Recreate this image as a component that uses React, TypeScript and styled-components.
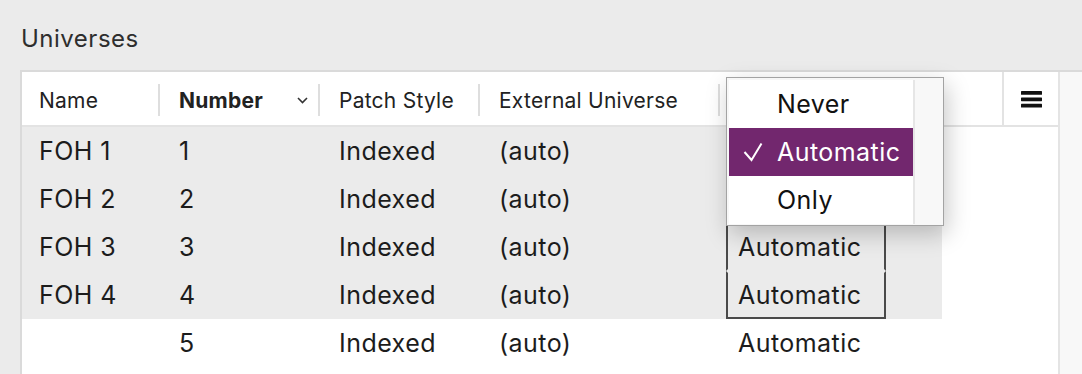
import React from "react";
import styled, { createGlobalStyle } from "styled-components";

const GlobalStyle = createGlobalStyle`
  html, body { margin: 0; padding: 0; background: #ebebeb; overflow: hidden; }
  body { font-family: Inter, "Open Sans", "Liberation Sans", sans-serif; color: #1c1c1c; }
`;

const Page = styled.div`
  width: 1082px;
  height: 374px;
  padding-left: 20px;
  box-sizing: border-box;
  overflow: hidden;
`;

const Title = styled.div`
  padding-top: 24px;
  margin-left: 1px;
  height: 46px;
  font-size: 24px;
  letter-spacing: 0.5px;
  line-height: 30px;
  color: #2e2e2e;
`;

const Panel = styled.div`
  position: relative;
  display: flex;
  height: 304px;
  border-top: 2px solid #dadada;
  border-left: 2px solid #dadada;
  background: #f8f8f8;
`;

const TableArea = styled.div`
  width: 1036px;
  flex: none;
  background: #ffffff;
  border-right: 2px solid #e4e4e4;
`;

const Track = styled.div`
  flex: 1;
  background: #f8f8f8;
`;

const HeaderRow = styled.div`
  display: flex;
  height: 53px;
  border-bottom: 2px solid #e3e3e3;
`;

const HeaderCell = styled.div<{ $w: number; $pad: number; $sep?: boolean; $bold?: boolean }>`
  position: relative;
  width: ${(p) => p.$w}px;
  flex: none;
  box-sizing: border-box;
  display: flex;
  align-items: center;
  justify-content: space-between;
  padding: 4px 12px 0 ${(p) => p.$pad}px;
  font-size: 21px;
  letter-spacing: 0.25px;
  font-weight: ${(p) => (p.$bold ? 700 : 400)};
  color: #222;
  white-space: nowrap;
  &::after {
    content: "";
    display: ${(p) => (p.$sep ? "block" : "none")};
    position: absolute;
    right: 0;
    top: 12px;
    bottom: 9px;
    width: 2px;
    background: #dedede;
  }
`;

const MenuCell = styled.div`
  flex: 1;
  display: flex;
  align-items: center;
  justify-content: center;
  border-left: 2px solid #e3e3e3;
  padding-top: 1px;
`;

const Row = styled.div<{ $selected: boolean }>`
  display: flex;
  width: 920px;
  height: 48px;
  background: ${(p) => (p.$selected ? "#ebebeb" : "transparent")};
`;

const Cell = styled.div<{ $w: number; $pad: number }>`
  width: ${(p) => p.$w}px;
  flex: none;
  box-sizing: border-box;
  display: flex;
  align-items: center;
  padding-left: ${(p) => p.$pad}px;
  font-size: 25px;
  letter-spacing: 0.45px;
  color: #1c1c1c;
  white-space: nowrap;
`;

const EditBox = styled.div<{ $on: boolean; $top: boolean; $bottom: boolean }>`
  width: 160px;
  height: 48px;
  box-sizing: border-box;
  display: flex;
  align-items: center;
  padding-left: 10px;
  border-left: 2px solid ${(p) => (p.$on ? "#4a4a4a" : "transparent")};
  border-right: 2px solid ${(p) => (p.$on ? "#4a4a4a" : "transparent")};
  border-top: 2px solid ${(p) => (p.$on && p.$top ? "#4a4a4a" : "transparent")};
  border-bottom: 2px solid ${(p) => (p.$on && p.$bottom ? "#4a4a4a" : "transparent")};
`;

const Dropdown = styled.div`
  position: absolute;
  left: 704px;
  top: 5px;
  width: 218px;
  height: 149px;
  box-sizing: border-box;
  display: flex;
  padding: 2px 0 1px 2px;
  background: #f7f7f7;
  border: 1px solid #a3a3a3;
  box-shadow: 3px 8px 22px rgba(0, 0, 0, 0.22);
`;

const List = styled.div`
  width: 184px;
  flex: none;
  background: #ffffff;
`;

const Strip = styled.div`
  flex: 1;
  border-left: 2px solid #e6e6e6;
  background: #f8f8f8;
`;

const Item = styled.div<{ $active: boolean }>`
  height: 48px;
  display: flex;
  align-items: center;
  padding-left: 14px;
  font-size: 25px;
  letter-spacing: 0.45px;
  color: ${(p) => (p.$active ? "#ffffff" : "#111111")};
  background: ${(p) => (p.$active ? "#72276e" : "transparent")};
`;

const CheckSlot = styled.div`
  width: 34px;
  flex: none;
  display: flex;
  align-items: center;
`;

const columns = [
  { label: "Name", w: 138, pad: 17 },
  { label: "Number", w: 160, pad: 19 },
  { label: "Patch Style", w: 160, pad: 19 },
  { label: "External Universe", w: 240, pad: 19 },
];

const rows = [
  { name: "FOH 1", num: "1", sel: true, hidden: true },
  { name: "FOH 2", num: "2", sel: true, hidden: true },
  { name: "FOH 3", num: "3", sel: true, hidden: false },
  { name: "FOH 4", num: "4", sel: true, hidden: false },
  { name: "", num: "5", sel: false, hidden: false },
];

const Chevron = () => (
  <svg width="11" height="7" viewBox="0 0 11 7">
    <polyline points="1,1 5.5,5.5 10,1" fill="none" stroke="#333" strokeWidth="1.6" />
  </svg>
);

const Hamburger = () => (
  <svg width="21" height="17" viewBox="0 0 21 17">
    <rect x="0" y="0" width="21" height="3.8" rx="0.6" fill="#111" />
    <rect x="0" y="6.4" width="21" height="3.8" rx="0.6" fill="#111" />
    <rect x="0" y="12.8" width="21" height="3.8" rx="0.6" fill="#111" />
  </svg>
);

const Check = () => (
  <svg width="20" height="20" viewBox="0 0 20 20">
    <polyline points="1.5,10 8.5,18 18.5,1.5" fill="none" stroke="#fff" strokeWidth="2" />
  </svg>
);

const options = ["Never", "Automatic", "Only"];

export default function App() {
  return (
    <>
      <GlobalStyle />
      <Page>
        <Title>Universes</Title>
        <Panel>
          <TableArea>
            <HeaderRow>
              {columns.map((c, i) => (
                <HeaderCell key={c.label} $w={c.w} $pad={c.pad} $sep $bold={i === 1}>
                  <span>{c.label}</span>
                  {i === 1 && <Chevron />}
                </HeaderCell>
              ))}
              <HeaderCell $w={282} $pad={19} />
              <MenuCell>
                <Hamburger />
              </MenuCell>
            </HeaderRow>
            {rows.map((r, i) => (
              <Row key={i} $selected={r.sel}>
                <Cell $w={138} $pad={17}>{r.name}</Cell>
                <Cell $w={160} $pad={19}>{r.num}</Cell>
                <Cell $w={160} $pad={19}>Indexed</Cell>
                <Cell $w={240} $pad={19}>(auto)</Cell>
                <Cell $w={222} $pad={6}>
                  <EditBox $on={r.sel} $top={i === 0} $bottom={i === 3}>
                    {r.hidden ? null : "Automatic"}
                  </EditBox>
                </Cell>
              </Row>
            ))}
          </TableArea>
          <Track />
          <Dropdown>
            <List>
              {options.map((o) => (
                <Item key={o} $active={o === "Automatic"}>
                  <CheckSlot>{o === "Automatic" && <Check />}</CheckSlot>
                  {o}
                </Item>
              ))}
            </List>
            <Strip />
          </Dropdown>
        </Panel>
      </Page>
    </>
  );
}
